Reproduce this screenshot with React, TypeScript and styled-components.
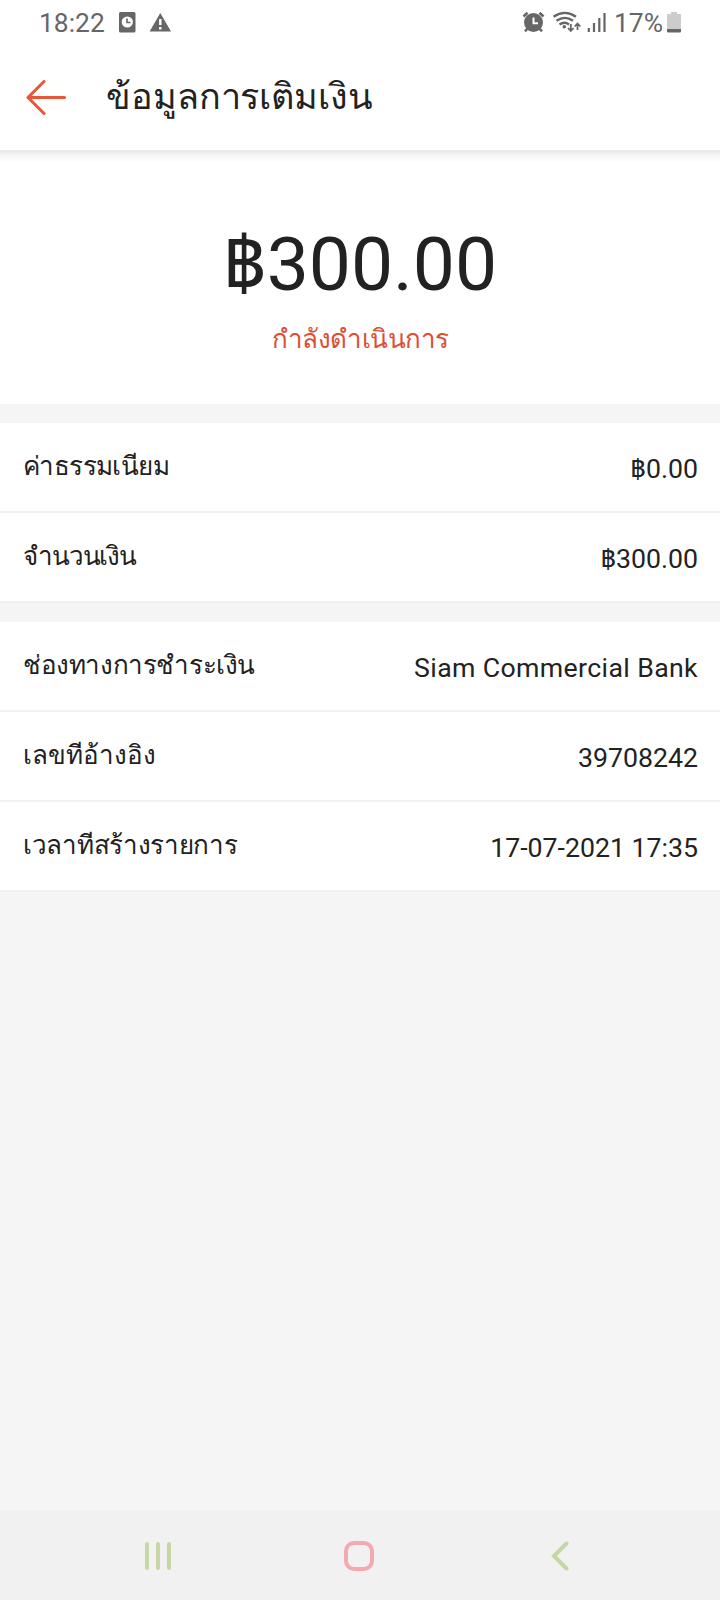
import React from 'react';
import styled, { createGlobalStyle } from 'styled-components';

const GlobalStyle = createGlobalStyle`
  * { box-sizing: border-box; }
  body { margin: 0; background: #f5f5f5; font-family: Roboto, sans-serif; }
`;

const Screen = styled.div`
  display: flex;
  flex-direction: column;
  width: 720px;
  height: 1600px;
  background: #f5f5f5;
  color: #222;
`;

const StatusBar = styled.div`
  display: flex;
  justify-content: space-between;
  height: 46px;
  padding: 0 38px 0 39px;
  background: #fff;
  color: #666;
`;

const StatusGroup = styled.div`
  display: flex;
  align-items: flex-start;
`;

const StatusText = styled.span<{ $width: number }>`
  width: ${(p) => p.$width}px;
  font-size: 26.4px;
  line-height: 46px;
  white-space: nowrap;
`;

const Header = styled.header`
  display: flex;
  align-items: center;
  height: 104px;
  padding-left: 26px;
  background: #fff;
`;

const Title = styled.h1`
  margin: 0 0 2px 39px;
  font-size: 36px;
  line-height: 60px;
  font-weight: 400;
  letter-spacing: -0.1px;
`;

const Summary = styled.section`
  display: flex;
  flex-direction: column;
  align-items: center;
  height: 254px;
  padding-top: 64px;
  background: linear-gradient(#e6e6e6, #f6f6f6 6px, #fff 12px);
`;

const Amount = styled.div`
  height: 100px;
  font-size: 75px;
  line-height: 100px;
`;

const Baht = styled.span`
  font-family: 'Noto Sans Thai', Roboto, sans-serif;
  line-height: 1;
`;

const State = styled.div`
  margin-top: 5px;
  font-size: 26px;
  line-height: 40px;
  letter-spacing: -0.5px;
  color: #dc4f34;
`;

const Group = styled.section`
  margin-top: 19px;
  background: #fff;
`;

const Row = styled.div`
  display: flex;
  justify-content: space-between;
  height: 90px;
  padding: 0 22px 0 23px;
  border-bottom: 2px solid #f1f1f1;
`;

const Label = styled.span<{ $tracking: number }>`
  font-size: 26px;
  line-height: 86px;
  letter-spacing: ${(p) => p.$tracking}px;
`;

const Value = styled.span<{ $tracking: number }>`
  height: 88px;
  font-size: 26.7px;
  line-height: 93px;
  letter-spacing: ${(p) => p.$tracking}px;
`;

const NavBar = styled.nav`
  display: flex;
  align-items: center;
  justify-content: space-between;
  height: 90px;
  margin-top: auto;
  padding: 2px 151px 0 144px;
  background: #f1f1f1;
`;

const HomeIcon = styled.svg`
  margin-right: 5px;
`;

type Entry = { label: string; value: string; baht?: boolean; labelTracking?: number; valueTracking?: number };

const groups: Entry[][] = [
  [
    { label: 'ค่าธรรมเนียม', value: '0.00', baht: true, labelTracking: -0.6 },
    { label: 'จำนวนเงิน', value: '300.00', baht: true, labelTracking: -1.15 },
  ],
  [
    { label: 'ช่องทางการชำระเงิน', value: 'Siam Commercial Bank', labelTracking: -0.4, valueTracking: 0.36 },
    { label: 'เลขทีอ้างอิง', value: '39708242' },
    { label: 'เวลาทีสร้างรายการ', value: '17-07-2021 17:35', labelTracking: -0.3 },
  ],
];

const NoticeIcons = () => (
  <svg width="60" height="46" viewBox="114 0 60 46" fill="#666">
    <rect x="119" y="12" width="16.5" height="20.5" rx="1.5" />
    <circle cx="127.3" cy="22" r="5.6" fill="#fff" />
    <path d="M127 18.5v4h3.5" fill="none" stroke="#666" strokeWidth="1.6" />
    <path d="M160.3 13 171 31.4h-21.4z" />
    <path d="M160.3 19v6M160.3 27v2.6" stroke="#fff" strokeWidth="2.4" />
  </svg>
);

const SignalIcons = () => (
  <svg width="94" height="46" viewBox="520 0 94 46" fill="none" stroke="#666">
    <circle cx="533.5" cy="22.5" r="9.5" fill="#666" stroke="none" />
    <path d="m523.5 16.5 4-3.8M543.5 16.5l-4-3.8M527.5 28.5l-2.5 2.8M539.5 28.5l2.5 2.8" strokeWidth="2.6" />
    <path d="M533.5 17.5v5.7h4.5" stroke="#fff" strokeWidth="2" />
    <path d="M553.5 16.8q11.500-7.8 22.5 0M556.5 20.8q8.500-5.8 16.5 0M559.5 24.5q5-3.5 9.5 0" strokeWidth="2.4" />
    <circle cx="564.3" cy="26.8" r="1.8" fill="#666" stroke="none" />
    <path d="M570.8 24v7M568 28l2.8 3 2.8-3M577.5 30v-6.5M574.7 26.5l2.8-3 2.8 3" strokeWidth="1.8" />
    <path d="M588.8 28v4M594 23v9M599.3 18v14M604.5 13v19" strokeWidth="2.2" />
  </svg>
);

const BatteryIcon = () => (
  <svg width="15" height="46" viewBox="667 0 15 46">
    <path d="M671 12h6v2h3q1 0 1 1v14h-14V15q0-1 1-1h3z" fill="#ccc" />
    <path d="M667 29h14v2.5q0 1-1 1h-12q-1 0-1-1z" fill="#666" />
  </svg>
);

const BackArrow = () => (
  <svg width="41" height="36" viewBox="0 0 41 36" fill="none" stroke="#e8563a" strokeWidth="3" strokeLinecap="round" strokeLinejoin="round">
    <path d="M18 1.5 2 17.5l16 16M2 17.5h36.5" />
  </svg>
);

export default function App() {
  return (
    <Screen>
      <GlobalStyle />
      <StatusBar>
        <StatusGroup>
          <StatusText $width={75}>18:22</StatusText>
          <NoticeIcons />
        </StatusGroup>
        <StatusGroup>
          <SignalIcons />
          <StatusText $width={53}>17%</StatusText>
          <BatteryIcon />
        </StatusGroup>
      </StatusBar>
      <Header>
        <BackArrow />
        <Title>ข้อมูลการเติมเงิน</Title>
      </Header>
      <Summary>
        <Amount>
          <Baht>฿</Baht>300.00
        </Amount>
        <State>กำลังดำเนินการ</State>
      </Summary>
      {groups.map((rows, i) => (
        <Group key={i}>
          {rows.map((row) => (
            <Row key={row.label}>
              <Label $tracking={row.labelTracking ?? 0}>{row.label}</Label>
              <Value $tracking={row.valueTracking ?? 0}>
                {row.baht && <Baht>฿</Baht>}
                {row.value}
              </Value>
            </Row>
          ))}
        </Group>
      ))}
      <NavBar>
        <svg width="28" height="30" stroke="#c5d8a4" strokeWidth="4" strokeLinecap="round">
          <path d="M3 3v24M14 3v24M25 3v24" />
        </svg>
        <HomeIcon width="30" height="30" fill="none" stroke="#f4a9ae" strokeWidth="4">
          <rect x="2" y="2" width="26" height="26" rx="8" />
        </HomeIcon>
        <svg width="18" height="30" fill="none" stroke="#c5d8a4" strokeWidth="4" strokeLinecap="round">
          <path d="M15.5 2.5 3 15l12.5 12.5" />
        </svg>
      </NavBar>
    </Screen>
  );
}
